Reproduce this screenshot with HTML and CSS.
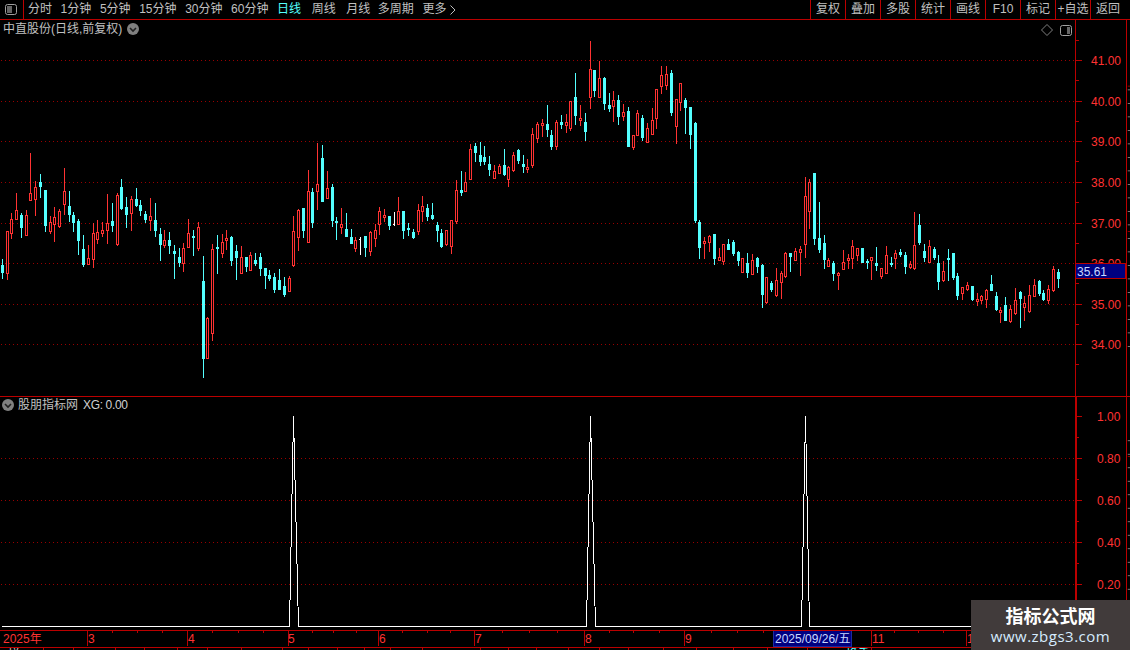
FILE: index.html
```html
<!DOCTYPE html>
<html lang="zh">
<head>
<meta charset="utf-8">
<title>中直股份</title>
<link rel="stylesheet" href="styles.css">
</head>
<body>
<div class="app">
  <header class="toolbar">
    <div class="panel-toggle">
      <svg class="icon-panel" width="12" height="11" viewBox="0 0 12 11"><rect class="icon-frame" x="0.5" y="0.5" width="11" height="10" rx="2"/><rect class="icon-fill" x="2" y="2" width="5" height="7"/></svg>
    </div>
    <nav class="periods">
      <span class="period">分时</span>
      <span class="period">1分钟</span>
      <span class="period">5分钟</span>
      <span class="period">15分钟</span>
      <span class="period">30分钟</span>
      <span class="period">60分钟</span>
      <span class="period is-active">日线</span>
      <span class="period period-wide">周线</span>
      <span class="period period-wide">月线</span>
      <span class="period period-tight">多周期</span>
      <span class="period">更多<svg class="chev-right" width="6" height="10" viewBox="0 0 6 10"><path d="M0.5 0.5 L5 5 L0.5 9.5"/></svg></span>
    </nav>
    <div class="actions">
      <span class="action">复权</span>
      <span class="action">叠加</span>
      <span class="action">多股</span>
      <span class="action">统计</span>
      <span class="action">画线</span>
      <span class="action">F10</span>
      <span class="action">标记</span>
      <span class="action">+自选</span>
      <span class="action action-last">返回</span>
    </div>
  </header>

  <section class="pane pane-price">
    <div class="plot">
      <svg id="price-chart" class="chart" width="1075" height="376" viewBox="0 20 1075 376"></svg>
      <div class="pane-title">
        <span>中直股份(日线,前复权)</span>
        <svg class="icon-down" width="12" height="12" viewBox="0 0 12 12"><circle class="icon-disc" cx="6" cy="6" r="6"/><path class="icon-chev" d="M3 5 L6 8 L9 5"/></svg>
      </div>
      <div class="pane-tools">
        <svg width="12" height="12" viewBox="0 0 12 12"><path class="icon-diamond" d="M6 0.5 L11.5 6 L6 11.5 L0.5 6 Z"/></svg>
        <svg width="12" height="11" viewBox="0 0 12 11"><rect class="icon-frame" x="0.5" y="0.5" width="11" height="10" rx="2"/><rect class="icon-fill" x="7" y="2" width="3" height="7"/></svg>
      </div>
    </div>
    <svg id="price-axis" class="axis" width="50" height="376" viewBox="1076 20 50 376">
      <text x="1091" y="65">41.00</text>
      <text x="1091" y="106">40.00</text>
      <text x="1091" y="146">39.00</text>
      <text x="1091" y="187">38.00</text>
      <text x="1091" y="228">37.00</text>
      <text x="1091" y="268">36.00</text>
      <text x="1091" y="309">35.00</text>
      <text x="1091" y="349">34.00</text>
      <rect class="price-box" x="1075.5" y="263.5" width="50" height="15"/>
      <text class="price-now" x="1077" y="276">35.61</text>
    </svg>
    <svg class="strip" data-first="30" width="4" height="376" viewBox="0 0 4 376"></svg>
  </section>

  <section class="pane pane-signal">
    <div class="plot">
      <svg id="signal-chart" class="chart" width="1075" height="233" viewBox="0 397 1075 233"></svg>
      <div class="pane-title pane-title-signal">
        <svg class="icon-down" width="12" height="12" viewBox="0 0 12 12"><circle class="icon-disc" cx="6" cy="6" r="6"/><path class="icon-chev" d="M3 5 L6 8 L9 5"/></svg>
        <span>股朋指标网</span>
        <span class="signal-value">XG: 0.00</span>
      </div>
    </div>
    <svg id="signal-axis" class="axis" width="50" height="233" viewBox="1076 397 50 233">
      <text x="1097" y="421">1.00</text>
      <text x="1097" y="463">0.80</text>
      <text x="1097" y="505">0.60</text>
      <text x="1097" y="547">0.40</text>
      <text x="1097" y="589">0.20</text>
    </svg>
    <svg class="strip" data-first="19" width="4" height="233" viewBox="0 0 4 233"></svg>
  </section>

  <svg id="time-axis" class="time-axis" width="1130" height="16" viewBox="0 631 1130 16">
    <text x="3" y="643">2025年</text>
    <text x="88" y="643">3</text>
    <text x="188" y="643">4</text>
    <text x="288" y="643">5</text>
    <text x="379" y="643">6</text>
    <text x="475" y="643">7</text>
    <text x="585" y="643">8</text>
    <text x="685" y="643">9</text>
    <rect class="date-box" x="773.5" y="630.5" width="78" height="16"/>
    <text class="date-now" x="775" y="643">2025/09/26/五</text>
    <text x="872" y="643">11</text>
    <text x="967" y="643">12</text>
  </svg>

  <footer class="status">
    <span class="cell cell-text">拼</span><span class="cell cell-text">·</span><span class="cell"></span><span class="cell"></span><span class="cell"></span><span class="cell"></span><span class="cell"></span><span class="cell"></span><span class="cell"></span><span class="cell"></span><span class="cell"></span><span class="cell"></span><span class="cell"></span><span class="cell"></span><span class="cell"></span><span class="cell"></span><span class="cell"></span><span class="cell"></span><span class="cell"></span><span class="cell"></span><span class="cell"></span><span class="cell"></span><span class="cell"></span><span class="cell"></span><span class="cell cell-last"><span class="cell-white">·</span><span class="cell-cyan">换手</span></span><span class="cell"></span>
  </footer>

  <aside class="watermark">
    <strong class="wm-title">指标公式网</strong>
    <span class="wm-url">www.zbgs3.com</span>
  </aside>
</div>
<script src="script.js"></script>
</body>
</html>
```
FILE: styles.css
```css
* { box-sizing: border-box; }
html, body { margin: 0; padding: 0; background: #000; }
body { font-family: "Liberation Sans", "Noto Sans CJK SC", sans-serif; font-size: 12px; color: #c0c0c0; }
svg { display: block; }

.app { position: relative; width: 1130px; height: 650px; overflow: hidden; background: #000; display: flex; flex-direction: column; }

.toolbar { height: 20px; flex: none; display: flex; align-items: stretch; border-bottom: 1px solid #bb0000; line-height: 19px; }
.panel-toggle { width: 24px; flex: none; border-right: 1px solid #bb0000; display: flex; align-items: center; padding-left: 5px; }
.icon-frame { fill: none; stroke: #a0a0a0; }
.icon-fill { fill: #666; }
.periods { display: flex; gap: 8.6px; padding-left: 4px; flex: 1; }
.period { white-space: nowrap; display: flex; align-items: center; gap: 4px; }
.period-wide { margin-left: 2px; }
.period-tight { margin-left: -1px; }
.is-active { color: #54ffff; }
.chev-right path { fill: none; stroke: #c0c0c0; }
.actions { display: flex; flex: none; }
.action { width: 35px; border-left: 1px solid #bb0000; text-align: center; white-space: nowrap; }
.action-last { width: 40px; padding-right: 5px; }

.pane { display: flex; flex: none; }
.pane-price { height: 376px; }
.pane-signal { height: 234px; border-top: 1px solid #bb0000; }
.plot { position: relative; width: 1075px; flex: none; }
.axis { flex: none; width: 51px; border-left: 1px solid #bb0000; overflow: hidden; }
.axis text, .time-axis text { fill: #ff3232; font-size: 12px; font-family: "Liberation Sans", "Noto Sans CJK SC", sans-serif; }
.strip { flex: none; width: 4px; border-left: 1px solid #bb0000; }
.axis-major, .axis-minor { fill: #bb0000; }
.price-box { fill: #000080; stroke: #bb0000; }
.axis .price-now { fill: #c8d8ff; }
.strip-tick { fill: #a0a0a0; }
.strip-red { fill: #bb0000; }

.pane-title { position: absolute; left: 3px; top: 2px; display: flex; align-items: center; gap: 5px; line-height: 14px; }
.pane-title-signal { left: 2px; top: 1px; gap: 4px; }
.signal-value { margin-left: 1px; color: #d0d0d0; letter-spacing: -0.35px; }
.icon-disc { fill: #808080; }
.icon-chev { fill: none; stroke: #202020; stroke-width: 1.6; }
.pane-tools { position: absolute; right: 3px; top: 4px; display: flex; gap: 7px; align-items: center; }
.icon-diamond { fill: none; stroke: #808080; }

.grid-line { stroke: #990000; stroke-width: 1; stroke-dasharray: 1 3; shape-rendering: crispEdges; }
.wick-up { fill: #ff3232; }
.wick-down { fill: #54ffff; }
.wick-flat { fill: #fff; }
.body-up { fill: #000; stroke: #ff3232; shape-rendering: crispEdges; }
.body-down { fill: #54ffff; }
.body-flat { fill: #fff; }
.signal-line { fill: none; stroke: #fff; stroke-width: 1; shape-rendering: crispEdges; }

.time-axis { flex: none; border-top: 1px solid #bb0000; height: 17px; }
.time-sep, .time-tick { fill: #bb0000; }
.date-box { fill: #000080; stroke: #1a2aa0; }
.time-axis .date-now { fill: #c8d8ff; }

.status { flex: none; height: 3px; border-top: 1px solid #bb0000; display: grid; overflow: hidden;
  grid-template-columns: 43px 30px 42px 29px 33px 30px 34px 41px 26px 29px 27px 26px 32px 58px 28px 28px 32px 31px 29px 35px 33px 37px 34px 40px 64px 1fr; }
.cell { display: block; height: 12px; border-left: 1px solid #bb0000; line-height: 12px; font-size: 12px; white-space: nowrap; color: #d0d0d0; }
.cell:first-child { border-left: 0; }
.cell-text:first-child { padding-left: 8px; }
.cell-text { padding-left: 7px; }
.cell-last { padding-left: 20px; }
.cell-white { margin-right: 14px; }
.cell-cyan { color: #54ffff; }

.watermark { position: absolute; left: 971px; top: 600px; width: 159px; height: 50px; background: #413b3b; display: flex; flex-direction: column; align-items: center; padding-top: 3px; }
.wm-title { color: #fff; font-size: 18px; line-height: 24px; font-family: "Noto Sans CJK SC", sans-serif; font-weight: 700; }
.wm-url { color: #d6ecff; font-size: 15px; line-height: 18px; font-family: "Open Sans", sans-serif; letter-spacing: 0.5px; }
```
FILE: script.js
```javascript
// Each candle: kind (r rising, c falling, w flat), wick top, body top, body bottom, wick bottom (page y).
var CANDLES = [
"c259,265,272,278","r231,231,273,279","r213,219,233,238","r193,210,219,219","c213,215,227,237","r210,215,235,235","r153,193,200,200","r181,187,199,215","c174,182,186,197","c190,190,225,231",
"r216,222,231,233","r207,217,224,241","r209,211,226,227","r168,191,204,214","c191,206,214,221","c212,215,222,231","c219,221,240,254","c235,249,264,266","r245,258,264,264","r223,233,259,267",
"r220,232,239,243","r222,230,233,236","r194,223,230,243","c203,221,225,231","r193,195,244,245","c179,187,208,209","c197,207,214,227","r196,199,213,230","c188,199,205,206","c200,205,210,215",
"c211,214,219,222","r198,216,220,230","c203,220,230,236","c228,234,244,260","r230,240,245,247","c232,240,245,253","c245,251,253,278","c248,257,262,266","r243,248,263,271","r219,233,247,247",
"c230,236,237,255","r222,227,248,250","c256,281,358,377","r317,318,358,358","r244,249,333,340","c235,247,248,273","r234,242,253,257","r230,238,240,249","c236,237,260,265","c245,251,257,279",
"r246,257,273,273","c257,257,266,271","r252,255,270,270","c253,260,263,265","c253,257,268,275","c268,268,275,288","c270,275,278,280","c273,277,289,292","c269,280,289,289","c277,286,294,296",
"r276,278,291,291","r216,231,265,266","r209,210,237,250","c208,208,230,237","r170,191,242,242","c188,192,222,227","r143,184,191,209","c145,158,201,201","r171,188,198,198","c184,187,220,226",
"c217,221,222,239","r208,224,227,233","c213,229,236,236","c229,237,243,243","r237,240,248,251","w237,239,240,254","c236,236,247,256","r231,232,251,255","r224,230,238,246","r207,211,224,234",
"r209,215,217,221","c216,216,225,229","w212,224,225,225","r197,211,224,224","c211,211,230,238","c223,228,229,235","c229,232,237,238","r204,210,231,234","r196,206,211,221","c204,208,216,220",
"c203,215,218,219","c222,225,230,241","c229,233,246,247","r230,230,244,245","r220,220,246,253","r180,190,221,223","c171,190,192,195","r172,182,191,191","r144,149,179,179","c143,146,152,161",
"c142,155,161,165","c146,157,161,164","c156,164,169,175","r165,171,178,178","r164,166,173,173","c149,165,174,175","r166,167,179,186","r152,155,170,171","c149,150,160,163","c155,164,166,172",
"r159,167,169,172","r128,134,165,167","r122,124,138,142","r119,123,125,136","c105,124,129,136","c130,135,146,149","r120,122,146,149","c115,122,124,128","r114,122,125,132","r101,101,128,130",
"c73,97,115,124","r105,118,120,125","c113,122,131,140","r41,69,97,108","c70,70,90,96","r61,78,97,97","c77,78,103,109","c93,105,108,111","r91,100,106,121","c95,100,116,124",
"r104,112,116,120","c107,111,146,146","r135,135,147,149","r110,113,135,135","c115,118,137,140","r123,128,142,142","r108,120,134,134","r89,89,118,128","r66,75,86,93","r66,74,85,89",
"c70,73,112,115","r99,99,126,143","r83,83,102,110","c98,100,107,133","c107,107,134,148","c122,123,220,222","c220,222,247,258","r237,241,243,258","r235,236,242,251","c234,234,258,264",
"r248,257,260,260","r244,244,261,264","c239,244,249,249","c240,242,253,255","c251,252,260,265","r258,258,272,272","c253,263,272,277","r254,260,274,274","c257,258,266,272","c264,265,294,307",
"r277,277,302,303","c281,283,289,291","r268,280,295,296","r271,273,282,298","r252,253,276,277","c253,253,256,271","r248,251,260,260","r246,249,252,275","r177,196,244,257","r179,182,211,228",
"c173,173,238,244","c202,238,249,252","c235,243,259,268","r258,260,266,266","c261,263,273,280","r272,273,275,289","r250,262,269,269","r254,258,260,268","r240,246,258,268","r248,248,255,260",
"c248,248,262,262","c259,261,262,268","r257,257,260,279","c247,263,265,270","r268,268,276,278","r246,255,273,273","c257,263,264,266","r250,253,258,268","c249,252,254,256","c252,255,266,273",
"r261,264,267,268","r212,245,268,269","c214,225,242,244","c244,251,257,261","r240,246,262,262","c247,249,257,259","c255,263,281,289","r261,271,280,281","c249,258,259,280","c253,253,277,279",
"c273,276,295,299","r287,287,293,299","r282,285,289,290","c286,286,299,300","r293,299,301,305","r295,296,300,303","r289,290,299,307","c275,284,290,290","c292,296,309,310","r307,310,312,322",
"c297,305,320,320","r305,309,321,322","r288,300,313,314","c291,292,298,327","r296,303,307,320","r285,295,311,312","r279,285,296,296","c280,281,293,295","c290,293,299,300","r285,289,300,303",
"r266,269,290,291","c269,272,278,287"
];

var NS = "http://www.w3.org/2000/svg";

function el(parent, tag, attrs) {
  var node = document.createElementNS(NS, tag);
  for (var key in attrs) node.setAttribute(key, attrs[key]);
  parent.appendChild(node);
  return node;
}

function box(parent, cls, x, y, w, h) {
  return el(parent, "rect", { "class": cls, x: x, y: y, width: w, height: h });
}

function gridLines(svg, ys) {
  ys.forEach(function (y) {
    el(svg, "line", { "class": "grid-line", x1: 1, x2: 1075, y1: y + 0.5, y2: y + 0.5 });
  });
}

function axisTicks(svg, majors, minors) {
  var first = svg.firstChild;
  majors.forEach(function (y) { svg.insertBefore(box(svg, "axis-major", 1076, y, 6, 1), first); });
  minors.forEach(function (y) { svg.insertBefore(box(svg, "axis-minor", 1076, y, 3, 1), first); });
}

// Price pane
var PRICE_LINES = [60, 101, 141, 182, 223, 263, 304, 344];
var price = document.getElementById("price-chart");
gridLines(price, PRICE_LINES);
CANDLES.forEach(function (row, i) {
  var kind = row.charAt(0);
  var v = row.slice(1).split(",").map(Number);
  var x = Math.floor(2.33 + i * 4.778);
  var name = kind === "r" ? "up" : kind === "c" ? "down" : "flat";
  box(price, "wick-" + name, x, v[0], 1, v[3] - v[0] + 1);
  if (kind === "r") {
    box(price, "body-up", x - 0.5, v[1] + 0.5, 2, Math.max(v[2] - v[1], 1));
  } else if (kind === "c") {
    box(price, "body-down", x - 1, v[1], 3, Math.max(v[2] - v[1] + 1, 1));
  } else {
    box(price, "body-flat", x - 1, v[1], 2, 1);
  }
});
var minorPrice = [];
for (var p = 0; p < PRICE_LINES.length; p++) minorPrice.push(PRICE_LINES[p] + 20);
minorPrice.push(40);
axisTicks(document.getElementById("price-axis"), PRICE_LINES, minorPrice);

// Signal pane
var signal = document.getElementById("signal-chart");
gridLines(signal, [458, 500, 542, 584]);
el(signal, "polyline", {
  "class": "signal-line",
  points: "2,626.5 289.5,626.5 293.5,416.5 298.5,626.5 586.5,626.5 590.5,416.5 595.5,626.5 801.5,626.5 805.5,416.5 809.5,626.5 1074,626.5"
});
var signalAxis = document.getElementById("signal-axis");
axisTicks(signalAxis, [416, 458, 500, 542, 584], [437, 479, 521, 563, 605]);
signalAxis.insertBefore(box(signalAxis, "axis-major", 1076, 397, 1, 233), signalAxis.firstChild);

// Right edge strips
Array.prototype.forEach.call(document.querySelectorAll(".strip"), function (strip) {
  var start = Number(strip.getAttribute("data-first"));
  var height = Number(strip.getAttribute("height"));
  for (var y = start; y < height; y += 18) box(strip, "strip-tick", 1, y, 3, 1);
});
var strips = document.querySelectorAll(".strip");
box(strips[0], "strip-red", 1, 25, 3, 1);
box(strips[0], "strip-red", 1, 219, 3, 1);
box(strips[1], "strip-red", 1, 40, 3, 1);

// Time axis
var time = document.getElementById("time-axis");
var firstLabel = time.firstChild;
[87, 187, 288, 378, 474, 584, 684, 871, 966].forEach(function (x) {
  time.insertBefore(box(time, "time-sep", x, 631, 1, 15), firstLabel);
});
[112, 137, 162, 212, 238, 263, 312, 333, 356, 402, 427, 450, 502, 529, 557, 609, 633, 659, 711, 737, 763, 894, 918, 943].forEach(function (x) {
  time.insertBefore(box(time, "time-tick", x, 631, 1, 2), firstLabel);
});
```
